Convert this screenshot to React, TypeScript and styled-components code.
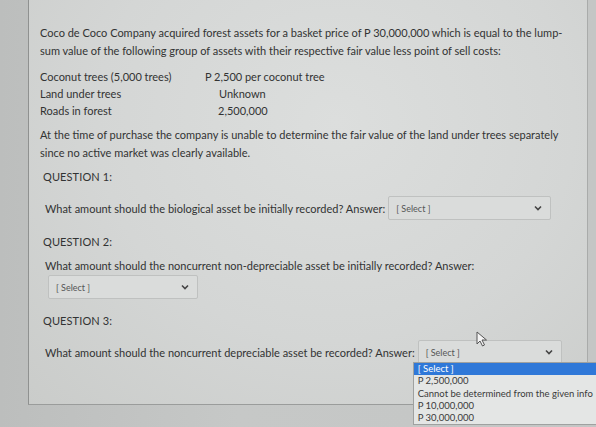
import styled, { createGlobalStyle } from 'styled-components';

const GlobalStyle = createGlobalStyle`
  html, body {
    margin: 0;
    padding: 0;
    background: #c2c4c3;
    font-family: Lato, "Open Sans", "Liberation Sans", sans-serif;
    overflow: hidden;
  }
`;

const options = [
  '[ Select ]',
  'P 2,500,000',
  'Cannot be determined from the given info',
  'P 10,000,000',
  'P 30,000,000',
];

const assets = [
  { name: 'Coconut trees (5,000 trees)', value: 'P 2,500 per coconut tree', indent: 0 },
  { name: 'Land under trees', value: 'Unknown', indent: 14 },
  { name: 'Roads in forest', value: '2,500,000', indent: 13 },
];

export default function App() {
  return (
    <>
      <GlobalStyle />
      <Page>
        <Panel>
          <Paragraph>
            Coco de Coco Company acquired forest assets for a basket price of P 30,000,000 which is equal to the lump-sum
            value of the following group of assets with their respective fair value less point of sell costs:
          </Paragraph>

          <AssetTable>
            {assets.map((a) => (
              <AssetRow key={a.name}>
                <span>{a.name}</span>
                <AssetValue indent={a.indent}>{a.value}</AssetValue>
              </AssetRow>
            ))}
          </AssetTable>

          <Paragraph top={7}>
            At the time of purchase the company is unable to determine the fair value of the land under trees separately
            since no active market was clearly available.
          </Paragraph>

          <QuestionTitle top={7}>QUESTION 1:</QuestionTitle>
          <InlineRow top={10}>
            <span>What amount should the biological asset be initially recorded? Answer:</span>
            <SelectBox width={163} />
          </InlineRow>

          <QuestionTitle top={13}>QUESTION 2:</QuestionTitle>
          <QuestionText>What amount should the noncurrent non-depreciable asset be initially recorded? Answer:</QuestionText>
          <StackedSelect>
            <SelectBox width={150} />
          </StackedSelect>

          <QuestionTitle top={13}>QUESTION 3:</QuestionTitle>
          <InlineRow top={10}>
            <span>What amount should the noncurrent depreciable asset be recorded? Answer:</span>
            <SelectAnchor>
              <SelectBox width={144} />
              <Cursor width="12" height="16" viewBox="0 0 12 16">
                <path d="M1 1 L1 13 L4 10 L6.5 15 L8.5 14 L6 9 L10.5 9 Z" fill="#f4f4f4" stroke="#555" strokeWidth="1" />
              </Cursor>
              <OptionList>
                {options.map((o, i) => (
                  <Option key={o} active={i === 0}>
                    {o}
                  </Option>
                ))}
              </OptionList>
            </SelectAnchor>
          </InlineRow>
        </Panel>
      </Page>
    </>
  );
}

const SelectBox = ({ width }: { width: number }) => (
  <Select width={width}>
    <span>[ Select ]</span>
    <svg width="8" height="6" viewBox="0 0 8 6">
      <path d="M1 1.5 L4 4.5 L7 1.5" fill="none" stroke="#444" strokeWidth="1.6" />
    </svg>
  </Select>
);

const Page = styled.div`
  width: 596px;
  height: 427px;
  padding-left: 28px;
  box-sizing: border-box;
  background: linear-gradient(90deg, #bcbebd 0%, #c6c8c7 40%, #c4c6c5 100%);
`;

const Panel = styled.div`
  width: 560px;
  height: 405px;
  box-sizing: border-box;
  padding: 24px 0 0 11px;
  border-left: 1px solid #8f9190;
  border-right: 1px solid #a9abaa;
  border-bottom: 1px solid #9a9c9b;
  background: radial-gradient(ellipse at 55% 30%, #dcdedd 0%, #d4d6d5 55%, #caccca 100%);
  color: #323333;
  font-size: 11px;
`;

const Paragraph = styled.p<{ top?: number }>`
  margin: ${({ top }) => top ?? 0}px 0 0;
  width: 538px;
  line-height: 17.5px;
`;

const AssetTable = styled.div`
  margin-top: 9px;
  display: flex;
  flex-direction: column;
  line-height: 17px;
`;

const AssetRow = styled.div`
  display: grid;
  grid-template-columns: 165px 1fr;
`;

const AssetValue = styled.span<{ indent: number }>`
  padding-left: ${({ indent }) => indent}px;
`;

const QuestionTitle = styled.div<{ top: number }>`
  margin-top: ${({ top }) => top}px;
  padding-left: 3px;
  line-height: 18px;
  letter-spacing: 0.1px;
`;

const QuestionText = styled.div`
  margin-top: 6px;
  padding-left: 5px;
  line-height: 18px;
`;

const InlineRow = styled.div<{ top: number }>`
  margin-top: ${({ top }) => top}px;
  padding-left: 5px;
  display: flex;
  align-items: center;
  gap: 3px;
`;

const StackedSelect = styled.div`
  padding-left: 8px;
`;

const SelectAnchor = styled.div`
  position: relative;
`;

const Select = styled.div<{ width: number }>`
  width: ${({ width }) => width}px;
  height: 24px;
  box-sizing: border-box;
  display: flex;
  align-items: center;
  justify-content: space-between;
  padding: 0 8px 0 7px;
  border: 1px solid #bfc1c0;
  border-radius: 2px;
  background: #dadcdb;
  font-size: 9px;
  color: #555656;
`;

const OptionList = styled.div`
  position: absolute;
  left: -5px;
  top: 22px;
  width: 184px;
  background: #e4e6e5;
  border: 1px solid #9fa1a0;
  border-right: none;
  font-size: 9.5px;
  white-space: nowrap;
  overflow: hidden;
`;

const Option = styled.div<{ active: boolean }>`
  height: 12.3px;
  line-height: 12px;
  padding-left: 4px;
  background: ${({ active }) => (active ? '#2f78d8' : 'transparent')};
  color: ${({ active }) => (active ? '#ffffff' : '#3a3a3a')};
`;

const Cursor = styled.svg`
  position: absolute;
  left: 58px;
  top: -9px;
`;
